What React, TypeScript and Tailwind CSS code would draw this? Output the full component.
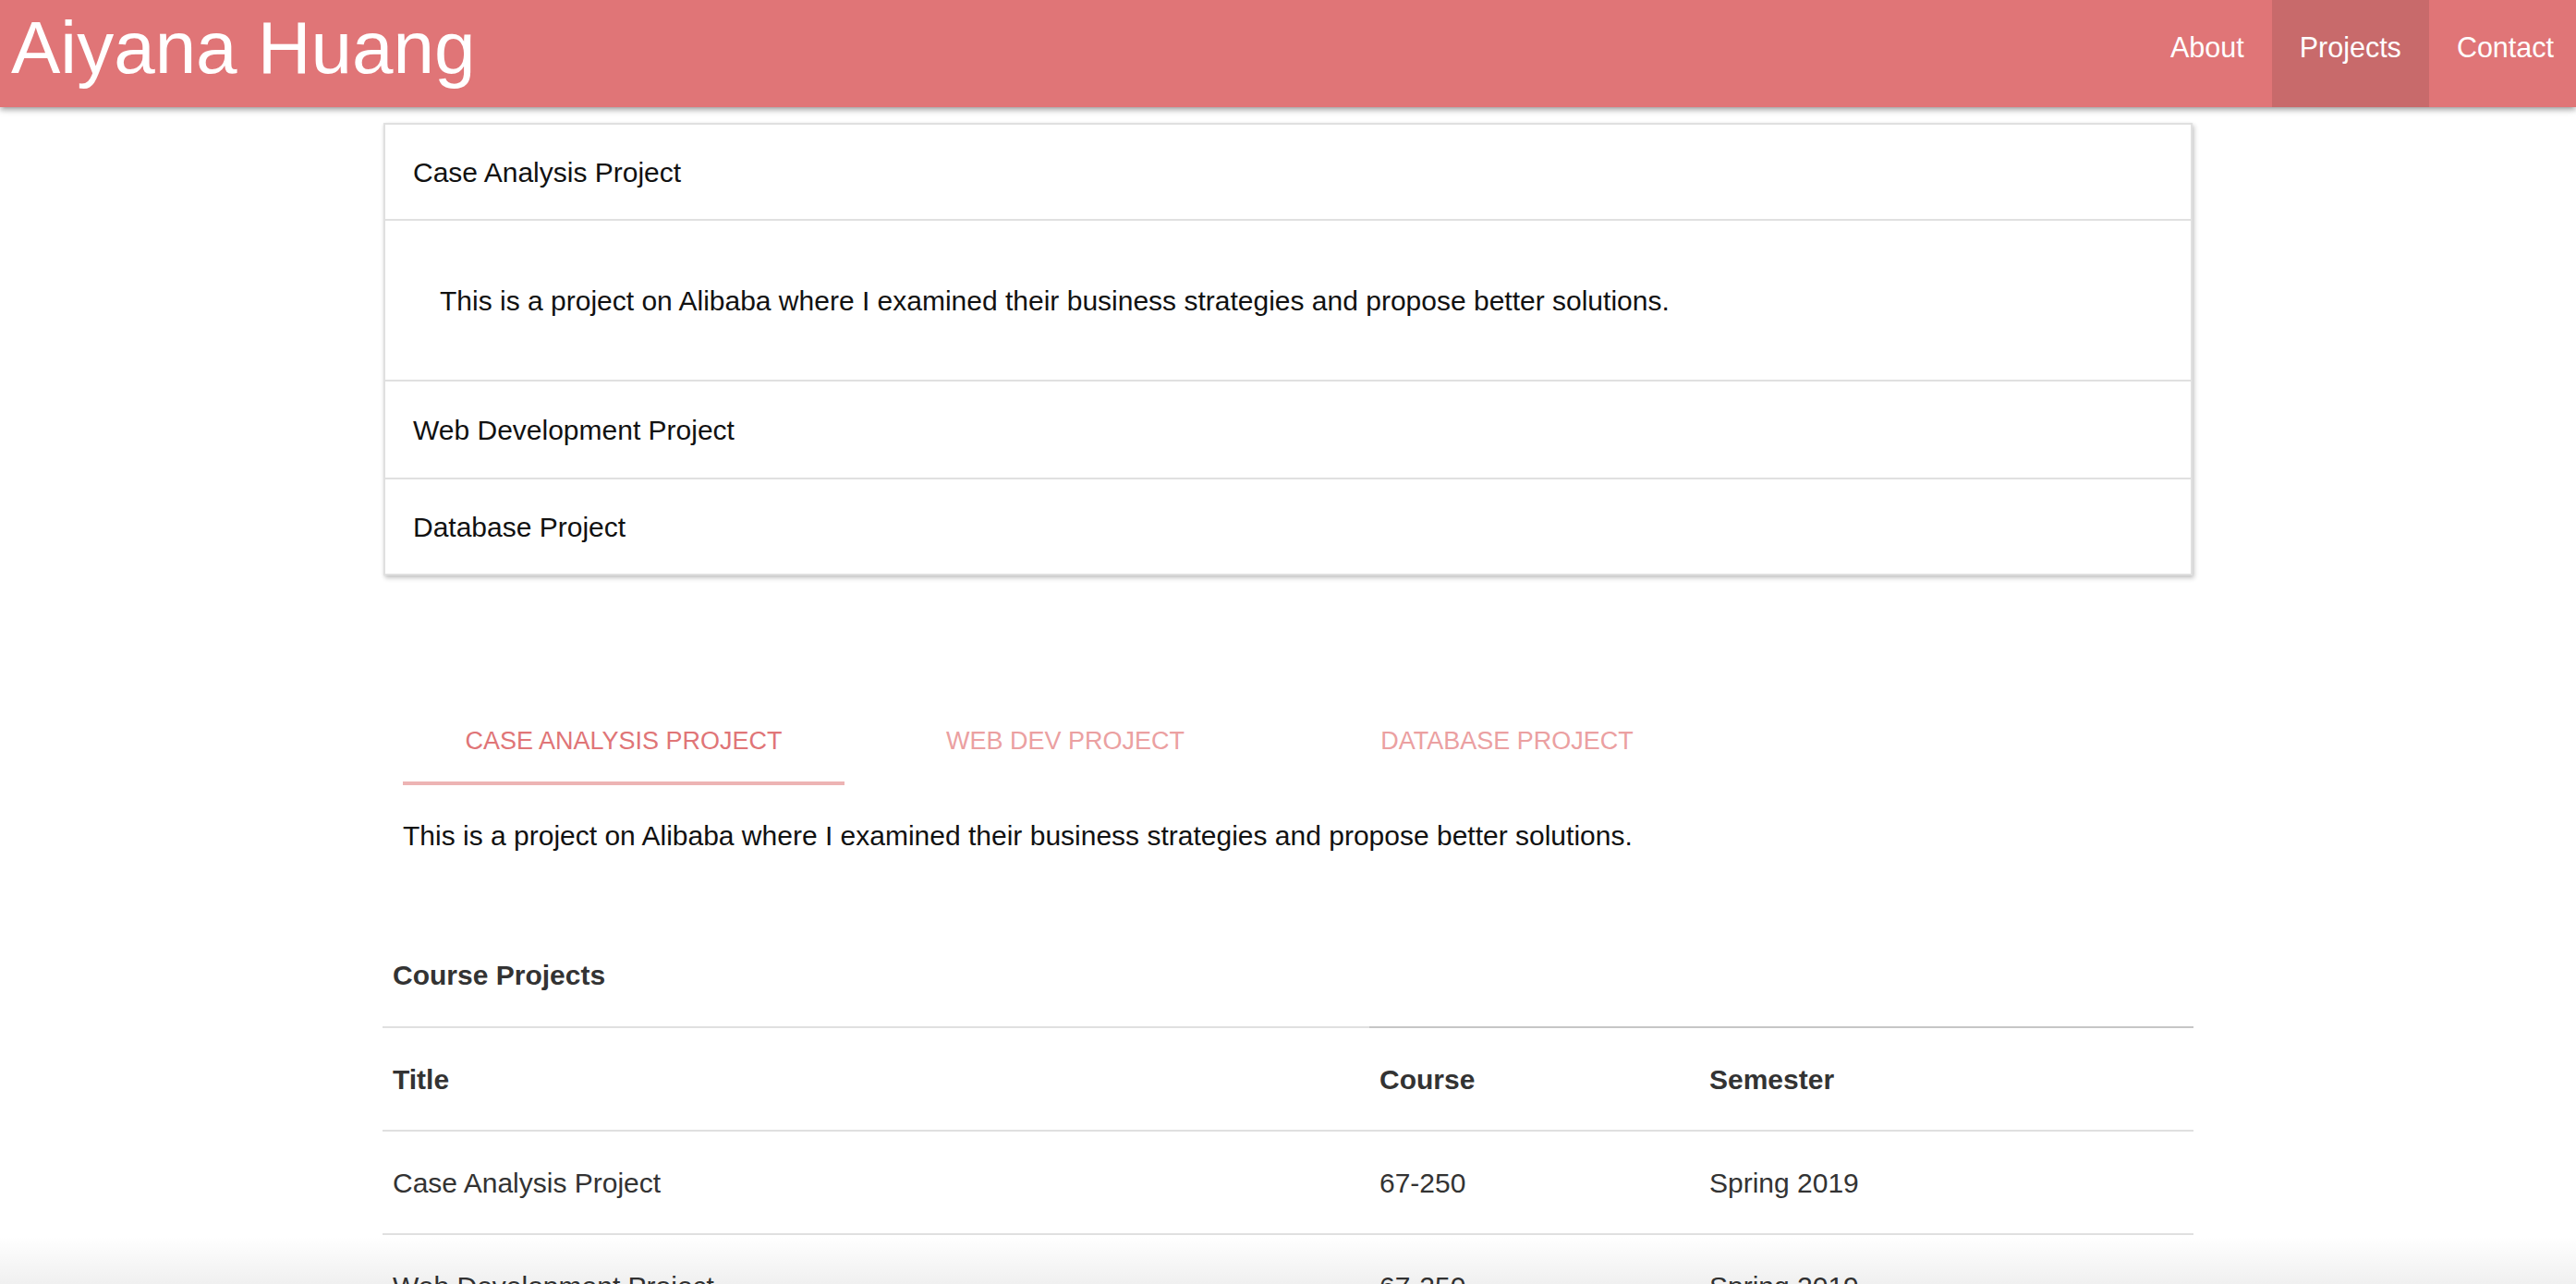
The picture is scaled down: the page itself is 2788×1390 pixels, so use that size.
import React from "react";

const body =
  "This is a project on Alibaba where I examined their business strategies and propose better solutions.";

function Row({ title, course, semester, bold }: { title: string; course: string; semester: string; bold?: boolean }) {
  return (
    <div
      className={`grid h-[112px] grid-cols-[1068px_357px_1fr] items-center border-b-2 border-[#e0e0e0] text-[30px] text-[#333] ${
        bold ? "font-bold" : ""
      }`}
    >
      <div className="px-[11px]">{title}</div>
      <div className="px-[11px]">{course}</div>
      <div className="px-[11px]">{semester}</div>
    </div>
  );
}

export default function App() {
  return (
    <div className="relative h-[1390px] overflow-hidden bg-white font-['Liberation_Sans',Arial,sans-serif]">
      <header className="relative z-10 flex h-[116px] items-start justify-between bg-[#e07577] shadow-[0_4px_4px_0_rgba(0,0,0,0.14),0_5px_2px_-4px_rgba(0,0,0,0.12),0_2px_9px_0_rgba(0,0,0,0.2)]">
        <div className="pl-[12px] text-[80px] leading-[104px] text-white">Aiyana Huang</div>
        <nav className="flex">
          <a className="block h-[116px] px-[30px] text-[30.5px] leading-[103px] text-white">About</a>
          <a className="block h-[116px] bg-[#c86a6b] px-[30px] text-[30.5px] leading-[103px] text-white">Projects</a>
          <a className="block h-[116px] pl-[30px] pr-[24px] text-[30.5px] leading-[103px] text-white">Contact</a>
        </nav>
      </header>

      <main className="mx-auto w-[1960px]">
        <ul className="mx-[1px] mt-[17px] border-2 border-[#e0e0e0] bg-white text-[30px] text-[#111] shadow-[2px_3px_5px_rgba(0,0,0,0.2),0_1px_3px_rgba(0,0,0,0.08)]">
          <li>
            <div className="flex h-[104px] items-center border-b-2 border-[#e0e0e0] pl-[30px]">Case Analysis Project</div>
            <div className="flex h-[174px] items-center border-b-2 border-[#e0e0e0] pl-[59px]">{body}</div>
          </li>
          <li>
            <div className="flex h-[106px] items-center border-b-2 border-[#e0e0e0] pl-[30px]">Web Development Project</div>
          </li>
          <li>
            <div className="flex h-[102px] items-center pl-[30px]">Database Project</div>
          </li>
        </ul>

        <section className="mt-[141px] px-[22px]">
          <div className="flex">
            <div className="relative h-[86px] w-[478px] text-center text-[27px] uppercase leading-[76px] text-[#e07577]">
              Case Analysis Project
              <div className="absolute inset-x-0 bottom-0 h-[4px] bg-[#edb4b4]" />
            </div>
            <div className="relative h-[86px] w-[478px] text-center text-[27px] uppercase leading-[76px] text-[#eba0a1]">
              Web Dev Project
            </div>
            <div className="relative h-[86px] w-[478px] text-center text-[27px] uppercase leading-[76px] text-[#eba0a1]">
              Database Project
            </div>
          </div>
          <p className="mt-[33px] text-[30px] leading-[44px] text-[#111]">{body}</p>
        </section>

        <section className="mt-[73px]">
          <div className="flex h-[111px] items-center px-[11px] text-[30px] font-bold text-[#333]">Course Projects</div>
          <div className="flex h-[2px]">
            <div className="w-[1068px] bg-[#e0e0e0]" />
            <div className="flex-1 bg-[#c6c6c6]" />
          </div>
          <Row title="Title" course="Course" semester="Semester" bold />
          <Row title="Case Analysis Project" course="67-250" semester="Spring 2019" />
          <Row title="Web Development Project" course="67-250" semester="Spring 2019" />
        </section>
      </main>

      <div className="pointer-events-none absolute inset-x-0 bottom-0 h-[52px] bg-linear-to-b from-black/0 to-black/[0.06]" />
    </div>
  );
}
